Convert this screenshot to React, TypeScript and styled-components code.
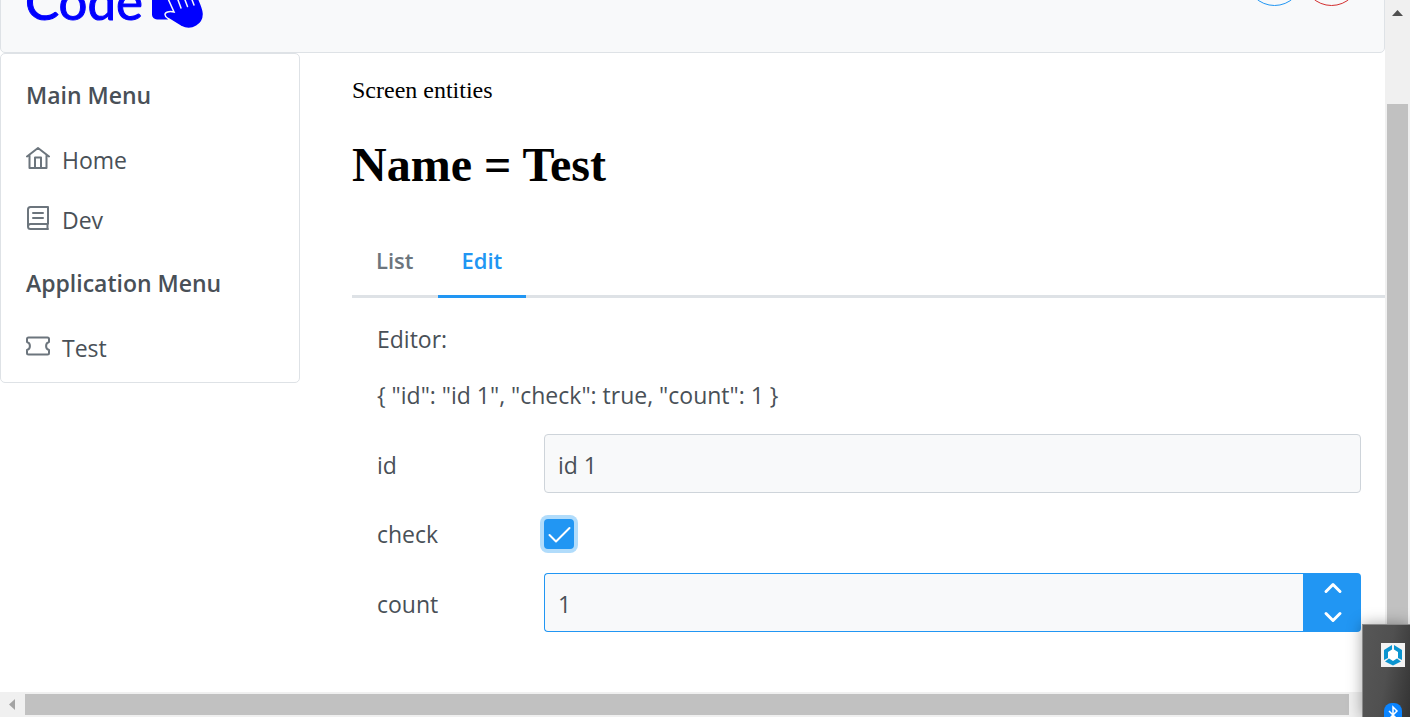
import React, { useState } from "react";
import styled, { createGlobalStyle } from "styled-components";

const GlobalStyle = createGlobalStyle`
  *, *::before, *::after { box-sizing: border-box; }
  body { margin: 0; background: #fff; overflow: hidden; }
  body, button, input { font-family: "Open Sans", "Noto Sans", sans-serif; }
`;

const Window = styled.div`
  position: relative;
  display: grid;
  grid-template-columns: minmax(0, 1fr) 25px;
  grid-template-rows: minmax(0, 1fr) 25px;
  height: 100vh;
  overflow: hidden;
`;

const Page = styled.div`
  overflow: hidden;
  color: #495057;
  font-size: 23px;
  line-height: 32px;
`;

const Header = styled.header`
  display: flex;
  justify-content: space-between;
  align-items: flex-start;
  margin-top: -76px;
  padding: 24px;
  background: #f8f9fa;
  border: 1px solid #dee2e6;
  border-radius: 5px;
`;

const Logo = styled.a`
  display: flex;
  align-items: flex-end;
  gap: 8px;
  height: 79px;
  color: #00f;
  font-family: Lato, sans-serif;
  font-size: 51px;
  line-height: 54px;
  -webkit-text-stroke: 1px #00f;
  text-decoration: none;
`;

const HeaderActions = styled.div`
  display: flex;
`;

const RoundButton = styled.button<{ $color: string }>`
  width: 57px;
  height: 57px;
  background: transparent;
  border: 1px solid ${(p) => p.$color};
  border-radius: 50%;
`;

const Columns = styled.div`
  display: flex;
  align-items: flex-start;
`;

const Sidebar = styled.nav`
  flex: none;
  width: 300px;
  padding: 8px 0 4px;
  border: 1px solid #dee2e6;
  border-radius: 5px;
`;

const MenuTitle = styled.h2`
  margin: 0;
  padding: 17px 25px 19px;
  font-size: 23px;
  line-height: 32px;
  font-weight: 600;
`;

const MenuList = styled.ul`
  margin: 0;
  padding: 0;
  list-style: none;
`;

const MenuLink = styled.a`
  display: flex;
  align-items: center;
  gap: 12px;
  height: 60px;
  padding: 0 25px;
  color: #495057;
  text-decoration: none;
  svg { flex: none; margin-bottom: 4px; color: #6c757d; }
`;

const Main = styled.main`
  flex: 1;
  min-width: 0;
  padding: 21px 0 0 52px;
`;

const Caption = styled.div`
  color: #000;
  font-family: "Liberation Serif", serif;
  font-size: 24px;
  line-height: 32px;
`;

const Title = styled.h1`
  margin: 31px 0 34px;
  color: #000;
  font-family: "Liberation Serif", serif;
  font-size: 48px;
  line-height: 56px;
`;

const Tabs = styled.div`
  display: flex;
  height: 71px;
  box-shadow: inset 0 -3px #dee2e6;
`;

const Tab = styled.button<{ $active: boolean }>`
  padding: 0 24px 2px;
  background: transparent;
  border: 0;
  border-bottom: 3px solid ${(p) => (p.$active ? "#2196f3" : "transparent")};
  color: ${(p) => (p.$active ? "#2196f3" : "#6c757d")};
  font-size: 22px;
  font-weight: 600;
`;

const Panel = styled.form`
  padding: 25px 24px 24px 25px;
`;

const Line = styled.p`
  margin: 0 0 24px;
`;

const Fields = styled.div`
  display: grid;
  grid-template-columns: 167px minmax(0, 1fr);
  align-items: center;
  row-gap: 22px;
  margin-top: -1px;
`;

const FieldLabel = styled.label`
  padding-top: 2px;
`;

const TextBox = styled.input`
  width: 100%;
  height: 59px;
  padding: 2px 13px 0;
  background: #f8f9fa;
  border: 1px solid #ced4da;
  border-radius: 4px;
  color: #495057;
  font-size: 23px;
  outline: none;
`;

const CheckHolder = styled.span`
  display: grid;
  width: 30px;
  height: 36px;
  padding-top: 2px;
  align-items: center;
  > * { grid-area: 1 / 1; }
  svg { pointer-events: none; }
`;

const CheckInput = styled.input`
  appearance: none;
  width: 30px;
  height: 30px;
  margin: 0;
  background: #2196f3;
  border-radius: 4px;
  box-shadow: 0 0 0 4px #b1dcfb;
  outline: none;
`;

const NumberField = styled.div`
  display: flex;
`;

const NumberBox = styled(TextBox)`
  flex: 1;
  min-width: 0;
  border-color: #2196f3;
  border-right: 0;
  border-radius: 4px 0 0 4px;
`;

const Stepper = styled.div`
  display: flex;
  flex-direction: column;
  width: 58px;
  overflow: hidden;
  border-radius: 0 4px 4px 0;
`;

const StepButton = styled.button`
  display: flex;
  flex: 1;
  align-items: center;
  justify-content: center;
  padding: 0 0 0 2px;
  background: #2196f3;
  border: 0;
`;

const VerticalBar = styled.div`
  display: flex;
  flex-direction: column;
  align-items: center;
  grid-row: 1 / 3;
  grid-column: 2;
  background: #f0f0f0;
`;

const HorizontalBar = styled.div`
  display: flex;
  align-items: center;
  padding-right: 36px;
  background: #f0f0f0;
`;

const Arrow = styled.svg`
  flex: none;
  width: 25px;
  height: 25px;
`;

const VerticalThumb = styled.div`
  flex: 1;
  width: 21px;
  margin-top: 79px;
  background: #c1c1c1;
`;

const HorizontalThumb = styled.div`
  flex: 1;
  height: 21px;
  background: #c1c1c1;
`;

const Tray = styled.aside`
  position: absolute;
  right: 0;
  bottom: 0;
  display: flex;
  flex-direction: column;
  align-items: flex-end;
  gap: 36px;
  width: 48px;
  height: 93px;
  padding: 18px 5px 0;
  overflow: hidden;
  background: linear-gradient(100deg, #575757 0%, #505050 50%, #333 100%);
  border: solid #8a8a8a;
  border-width: 1px 0 0 1px;
  box-shadow: 0 0 14px rgba(0, 0, 0, 0.35);
  svg { flex: none; }
`;

const stroke = { fill: "none", stroke: "currentColor", strokeWidth: 2, strokeLinejoin: "round", strokeLinecap: "round" } as const;

const HomeIcon = () => (
  <svg width="24" height="24" viewBox="0 0 24 24" {...stroke} aria-hidden="true">
    <path d="M1 10.500 12 2l11 8.500M3.500 9v13h17V9M9 22V11.500h6V22" />
  </svg>
);

const BookIcon = () => (
  <svg width="24" height="26" viewBox="0 0 24 26" {...stroke} aria-hidden="true">
    <path d="M22 19V2H4.500A2.500 2.500 0 0 0 2 4.500v17A2.500 2.500 0 0 0 4.500 24H22M22 19H4.500A2.500 2.500 0 0 0 2 21.500M21.500 19v5M7 8h10M7 13h10" />
  </svg>
);

const TicketIcon = () => (
  <svg width="24" height="24" viewBox="0 0 24 24" {...stroke} aria-hidden="true">
    <path d="M2.500 3.500h19a1.500 1.500 0 0 1 1.500 1.500v3a4.200 4.200 0 0 0 0 8v3a1.500 1.500 0 0 1-1.500 1.500h-19A1.500 1.500 0 0 1 1 19v-3a4.200 4.200 0 0 0 0-8V5a1.500 1.500 0 0 1 1.500-1.500Z" />
  </svg>
);

const HandIcon = () => (
  <svg width="54" height="60" viewBox="0 -32 54 60" stroke="none" aria-hidden="true">
    <path fill="#00f" d="M1-26h34v30L17 19.500H6a5 5 0 0 1-5-5Z" />
    <path fill="#00f" stroke="#f8f9fa" strokeWidth="1.500" d="M14-8 23 12C18 11 14 12 14 14.500c0 2 1.500 3 3 4l13 8c11 5.500 23-2 22.500-13C52.500 8 48 0 44-10Z" />
    <path fill="none" stroke="#f8f9fa" strokeWidth="1.500" strokeLinecap="round" d="m24-8 6 16M31-8l5.500 14.500M38-8l5 13" />
  </svg>
);

const Chevron = ({ d }: { d: string }) => (
  <svg width="20" height="14" viewBox="0 0 20 14" fill="none" stroke="#fff" strokeWidth="3" strokeLinecap="round" strokeLinejoin="round" aria-hidden="true">
    <path d={d} />
  </svg>
);

export default function App() {
  const [id, setId] = useState("id 1");
  const [check, setCheck] = useState(true);
  const [count, setCount] = useState(1);
  const [tab, setTab] = useState("Edit");

  return (
    <Window>
      <GlobalStyle />
      <Page>
        <Header>
          <Logo href="#">
            Code
            <HandIcon />
          </Logo>
          <HeaderActions>
            <RoundButton type="button" $color="#2196f3" aria-label="Profile" />
            <RoundButton type="button" $color="#d32f2f" aria-label="Sign out" />
          </HeaderActions>
        </Header>
        <Columns>
          <Sidebar>
            <MenuTitle>Main Menu</MenuTitle>
            <MenuList>
              <li><MenuLink href="#"><HomeIcon />Home</MenuLink></li>
              <li><MenuLink href="#"><BookIcon />Dev</MenuLink></li>
            </MenuList>
            <MenuTitle>Application Menu</MenuTitle>
            <MenuList>
              <li><MenuLink href="#"><TicketIcon />Test</MenuLink></li>
            </MenuList>
          </Sidebar>
          <Main>
            <Caption>Screen entities</Caption>
            <Title>Name = Test</Title>
            <Tabs role="tablist">
              {["List", "Edit"].map((name) => (
                <Tab key={name} type="button" role="tab" aria-selected={tab === name} $active={tab === name} onClick={() => setTab(name)}>
                  {name}
                </Tab>
              ))}
            </Tabs>
            <Panel>
              <Line>Editor:</Line>
              <Line>{`{ "id": "${id}", "check": ${check}, "count": ${count} }`}</Line>
              <Fields>
                <FieldLabel htmlFor="id">id</FieldLabel>
                <TextBox id="id" value={id} onChange={(e) => setId(e.target.value)} />
                <FieldLabel htmlFor="check">check</FieldLabel>
                <CheckHolder>
                  <CheckInput id="check" type="checkbox" checked={check} onChange={(e) => setCheck(e.target.checked)} />
                  {check && (
                    <svg width="30" height="30" viewBox="0 0 30 30" fill="none" stroke="#fff" strokeWidth="2" strokeLinecap="round" strokeLinejoin="round" aria-hidden="true">
                      <path d="m5.500 16 6.500 6.500L25.500 9" />
                    </svg>
                  )}
                </CheckHolder>
                <FieldLabel htmlFor="count">count</FieldLabel>
                <NumberField>
                  <NumberBox id="count" inputMode="numeric" value={count} onChange={(e) => setCount(Number(e.target.value) || 0)} />
                  <Stepper>
                    <StepButton type="button" aria-label="Increase" onClick={() => setCount(count + 1)}>
                      <Chevron d="m3 10.500 7-7 7 7" />
                    </StepButton>
                    <StepButton type="button" aria-label="Decrease" onClick={() => setCount(count - 1)}>
                      <Chevron d="m3 3.500 7 7 7-7" />
                    </StepButton>
                  </Stepper>
                </NumberField>
              </Fields>
            </Panel>
          </Main>
        </Columns>
      </Page>
      <VerticalBar>
        <Arrow viewBox="0 0 25 25" aria-hidden="true"><path fill="#505050" d="m7 16 5.500-6 5.500 6Z" /></Arrow>
        <VerticalThumb />
      </VerticalBar>
      <HorizontalBar>
        <Arrow viewBox="0 0 25 25" aria-hidden="true"><path fill="#a3a3a3" d="m15 7-6 5.500 6 5.500Z" /></Arrow>
        <HorizontalThumb />
      </HorizontalBar>
      <Tray>
        <svg width="24" height="24" viewBox="0 0 24 24" aria-hidden="true">
          <path fill="#f3f3f3" d="M0 0h24v24H0z" />
          <path fill="#fff" d="m12 6 5 3v6l-5 3-5-3V9Z" />
          <path fill="#0a94d0" d="M11 2v4.500L7 9v6l-4 2V7ZM13 2v4.500L17 9v6l4 2V7ZM4 18.500 8 15.500l4 2.500 4-2.500 4 3-8 4Z" />
        </svg>
        <svg width="24" height="24" viewBox="0 0 24 24" aria-hidden="true">
          <rect x="3" width="18" height="24" rx="8" fill="#0a84ff" />
          <path fill="none" stroke="#fff" strokeWidth="1.500" d="m8 8 8 8-4 4V4l4 4-8 8" />
        </svg>
      </Tray>
    </Window>
  );
}
